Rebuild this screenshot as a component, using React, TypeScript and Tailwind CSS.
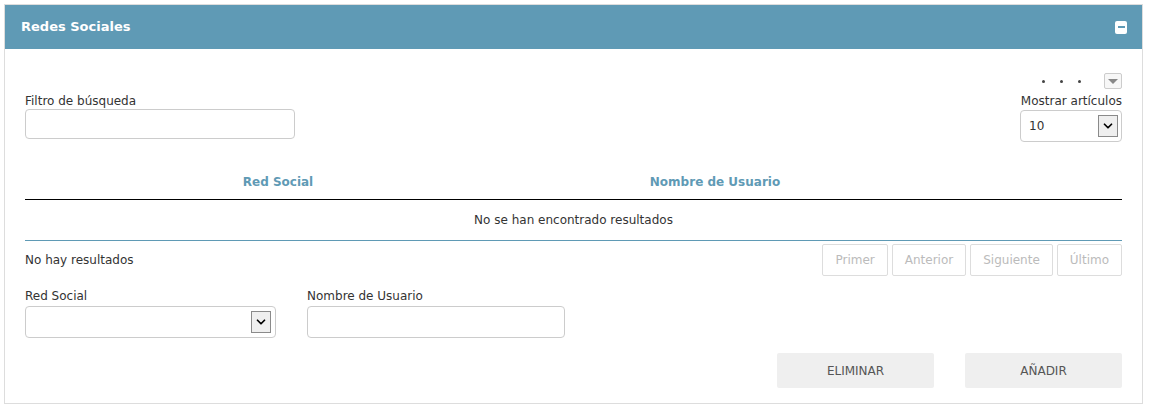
import { ChevronDown } from "lucide-react";

const FONT = { fontFamily: '"DejaVu Sans", "Open Sans", sans-serif' };

const NativeArrow = () => (
  <span className="flex h-[22px] w-[20px] items-center justify-center border border-[#8a8a8a] bg-[#efefef]">
    <ChevronDown size={14} strokeWidth={3} className="text-black" />
  </span>
);

const PAGES = ["Primer", "Anterior", "Siguiente", "Último"];

export default function App() {
  return (
    <div className="bg-white pb-[2px] pl-[4px] pr-[6px] pt-[4px] text-[12px] text-[#333]" style={FONT}>
      <div className="border border-[#dddddd]">
        <div className="flex h-[44px] items-center justify-between bg-[#5f9ab5] pl-[16px] pr-[15px]">
          <span className="text-[13px] font-bold text-white">Redes Sociales</span>
          <span className="flex h-[13px] w-[12px] items-center justify-center rounded-[2px] bg-white">
            <span className="h-[2px] w-[7px] bg-[#5f9ab5]" />
          </span>
        </div>

        <div className="px-[20px] pb-[15px] pt-[20px]">
          <div className="flex h-[24px] items-center justify-end">
            <div className="flex items-center gap-[15px]">
              <span className="h-[3px] w-[3px] rounded-full bg-[#444]" />
              <span className="h-[3px] w-[3px] rounded-full bg-[#444]" />
              <span className="h-[3px] w-[3px] rounded-full bg-[#444]" />
              <span className="ml-[8px] flex h-[16px] w-[18px] items-center justify-center rounded-[2px] border border-[#cccccc] bg-[#f7f7f7]">
                <span className="h-0 w-0 border-x-[5px] border-t-[5px] border-x-transparent border-t-[#888]" />
              </span>
            </div>
          </div>

          <div className="flex items-start justify-between">
            <div className="flex flex-col">
              <label className="leading-[16px]">Filtro de búsqueda</label>
              <input className="h-[30px] w-[270px] rounded-[4px] border border-[#cccccc] outline-none" />
            </div>
            <div className="flex flex-col items-end">
              <label className="mb-[1px] leading-[16px]">Mostrar artículos</label>
              <div className="flex h-[32px] w-[102px] items-center justify-between rounded-[4px] border border-[#cccccc] pl-[8px] pr-[3px]">
                <span>10</span>
                <NativeArrow />
              </div>
            </div>
          </div>

          <div className="mt-[23px]">
            <div className="grid grid-cols-[506px_368px_1fr] border-b border-black">
              <div className="py-[9px] text-center font-bold leading-[16px] text-[#5f9ab5]">Red Social</div>
              <div className="py-[9px] text-center font-bold leading-[16px] text-[#5f9ab5]">Nombre de Usuario</div>
              <div />
            </div>
            <div className="border-b border-[#5f9ab5] py-[12px] text-center leading-[16px]">
              No se han encontrado resultados
            </div>
          </div>

          <div className="mt-[3px] flex items-center justify-between">
            <span>No hay resultados</span>
            <div className="flex gap-[4px]">
              {PAGES.map((p) => (
                <button
                  key={p}
                  type="button"
                  className="h-[32px] rounded-[2px] border border-[#dddddd] px-[12px] text-[#bbbbbb]"
                >
                  {p}
                </button>
              ))}
            </div>
          </div>

          <div className="mt-[12px] flex gap-[31px]">
            <div className="flex flex-col">
              <label className="mb-[2px] leading-[16px]">Red Social</label>
              <div className="flex h-[32px] w-[251px] items-center justify-end rounded-[4px] border border-[#cccccc] pr-[4px]">
                <NativeArrow />
              </div>
            </div>
            <div className="flex flex-col">
              <label className="mb-[2px] leading-[16px]">Nombre de Usuario</label>
              <input className="h-[32px] w-[258px] rounded-[4px] border border-[#cccccc] outline-none" />
            </div>
          </div>

          <div className="mt-[15px] flex justify-end gap-[31px]">
            <button type="button" className="h-[35px] w-[157px] rounded-[2px] bg-[#efefef] text-[#555]">
              ELIMINAR
            </button>
            <button type="button" className="h-[35px] w-[157px] rounded-[2px] bg-[#efefef] text-[#555]">
              AÑADIR
            </button>
          </div>
        </div>
      </div>
    </div>
  );
}
